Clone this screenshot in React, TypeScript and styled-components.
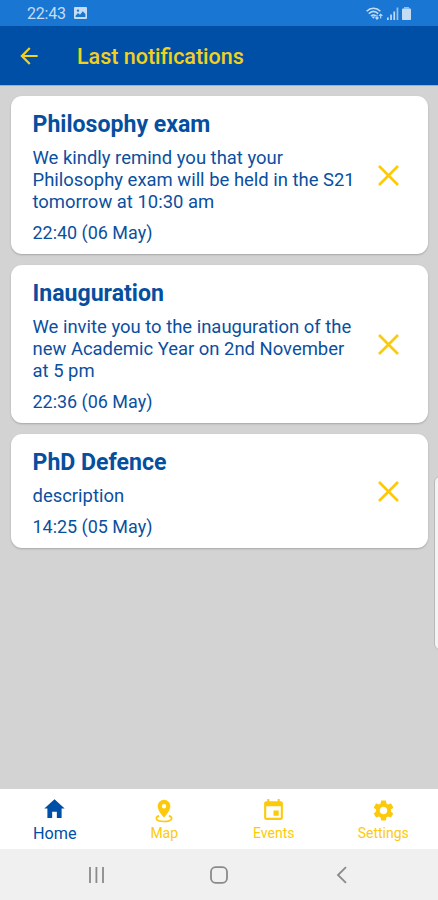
import React from 'react';
import styled, { createGlobalStyle } from 'styled-components';
import { MdArrowBack, MdEvent, MdSettings } from 'react-icons/md';
import { IoMdHome } from 'react-icons/io';

const BLUE = '#004fa6';
const YELLOW = '#fdca0b';

const GlobalStyle = createGlobalStyle`
  * { box-sizing: border-box; }
  body { margin: 0; font-family: Roboto, 'Noto Sans', sans-serif; background: #d3d3d3; }
  svg { display: block; flex: none; }
`;

const Screen = styled.div`
  position: relative;
  display: flex;
  flex-direction: column;
  height: 900px;
  width: 438px;
  overflow: hidden;
  background: #d3d3d3;
`;

const StatusBar = styled.div`
  height: 26px;
  flex: none;
  display: flex;
  align-items: center;
  justify-content: space-between;
  padding: 0 27px 0 27px;
  background: #1976d2;
  color: #c5dcf5;
  font-size: 16px;
`;

const StatusGroup = styled.div<{ $gap: number }>`
  display: flex;
  align-items: center;
  gap: ${(p) => p.$gap}px;
`;

const Clock = styled.span`
  width: 39px;
  white-space: nowrap;
  letter-spacing: -0.2px;
  padding-top: 1px;
`;

const AppBar = styled.header`
  height: 60px;
  flex: none;
  display: flex;
  align-items: center;
  padding: 0 16px;
  gap: 35px;
  background: ${BLUE};
  color: #f2d11d;
  border-bottom: 1px solid #8fb2dd;
`;

const BackButton = styled.button`
  border: 0;
  padding: 0;
  background: none;
  color: inherit;
`;

const AppTitle = styled.h1`
  margin: 2px 0 0;
  font-size: 21.5px;
  font-weight: 500;
  line-height: 28px;
  white-space: nowrap;
`;

const List = styled.main`
  flex: 1;
  display: flex;
  flex-direction: column;
  gap: 11px;
  padding: 10px 10px 0 11px;
`;

const Card = styled.article`
  display: flex;
  align-items: center;
  padding: 15px 22px 10px 21.5px;
  border-radius: 11px;
  background: #fff;
  color: #0b4f9f;
  box-shadow: 0 1px 2px rgba(0, 0, 0, 0.22);
`;

const CardBody = styled.div`
  flex: 1;
`;

const CardTitle = styled.h2`
  margin: 0 0 8px;
  font-size: 23.1px;
  font-weight: 700;
  line-height: 28px;
  color: #064f9f;
`;

const CardText = styled.p`
  margin: 0;
  font-size: 18.45px;
  line-height: 22px;
  white-space: pre;
`;

const CardTime = styled.time`
  display: block;
  margin-top: 9px;
  font-size: 17.95px;
  line-height: 22px;
`;

const CloseButton = styled.button`
  border: 0;
  padding: 0;
  margin: -5px 7px 0 0;
  background: none;
  color: ${YELLOW};
`;

const TabBar = styled.nav`
  height: 60px;
  flex: none;
  display: grid;
  grid-template-columns: repeat(4, 1fr);
  background: #fff;
`;

const Tab = styled.div<{ $active?: boolean }>`
  display: flex;
  flex-direction: column;
  align-items: center;
  padding-top: 8px;
  color: ${(p) => (p.$active ? BLUE : YELLOW)};
  font-size: ${(p) => (p.$active ? 16.2 : 14)}px;
`;

const TabIcon = styled.span<{ $active?: boolean }>`
  height: 27px;
  display: flex;
  align-items: center;
  padding-bottom: ${(p) => (p.$active ? 4 : 0)}px;
`;

const TabLabel = styled.span`
  line-height: 19px;
`;

const SystemNav = styled.div`
  height: 51px;
  flex: none;
  display: flex;
  align-items: center;
  justify-content: space-between;
  padding: 0 84px 0 83.5px;
  background: #f0f0f0;
`;

const EdgeHandle = styled.div`
  position: absolute;
  right: -8px;
  top: 476px;
  width: 12.5px;
  height: 174px;
  border-radius: 6px;
  border: 1px solid #b9b9b9;
  background: #f3f3f3;
`;

const ImageIcon = () => (
  <svg width="13" height="12" viewBox="0 0 13 12">
    <path
      fill="currentColor"
      fillRule="evenodd"
      d="M1 0h11a1 1 0 0 1 1 1v10a1 1 0 0 1-1 1H1a1 1 0 0 1-1-1V1a1 1 0 0 1 1-1zM1.6 10h9.8V7L8.800 4.200 6 7.800 4 6 1.600 8.800zM4 2.400a1.200 1.200 0 1 0 0 2.400 1.200 1.200 0 0 0 0-2.400z"
    />
  </svg>
);

const WifiIcon = () => (
  <svg width="17" height="13" viewBox="0 0 17 13" fill="none" stroke="currentColor" strokeWidth="1.600">
    <path d="M.6 4.200C4.600.2 10.400.2 14.400 4.200M2.800 6.700c3-2.900 6.400-2.900 9.400 0M5 9c1.600-1.300 3.400-1.300 5 0" />
    <path d="M5.500 9.500h3.800L7.400 11.800z" fill="currentColor" stroke="none" />
    <path d="M11 7.800v4.300M9.500 10.500l1.500 1.600 1.500-1.600M14.700 11.600V7.200M13 8.900l1.700-1.700 1.700 1.700" strokeWidth="1.100" />
  </svg>
);

const SignalIcon = () => (
  <svg width="12" height="13" viewBox="0 0 12 13" fill="currentColor">
    <path d="M0 10.500h1.700V13H0zM3.200 7.500h1.700V13H3.200zM6.400 4.500h1.700V13H6.400z" />
    <path d="M9.600.5h1.700V13H9.600z" opacity=".75" />
  </svg>
);

const BatteryIcon = () => (
  <svg width="9" height="13" viewBox="0 0 9 13" fill="currentColor">
    <path d="M2 0h5v1.500H2z" opacity=".7" />
    <path d="M.8 1.500h7.400q.8 0 .8.800v9.900q0 .8-.8.800H.8Q0 13 0 12.200V2.300q0-.8.8-.8z" />
  </svg>
);

const CrossIcon = () => (
  <svg width="21" height="21" viewBox="0 0 21 21" fill="none" stroke="currentColor" strokeWidth="2.700">
    <path d="M1 1l19 19M20 1L1 20" />
  </svg>
);

const MapIcon = () => (
  <svg width="18" height="24" viewBox="0 0 18 24">
    <path
      fill="currentColor"
      fillRule="evenodd"
      d="M9 .8a6.400 6.400 0 0 1 6.400 6.400C15.400 11.900 9 18.600 9 18.600S2.600 11.900 2.600 7.200A6.400 6.400 0 0 1 9 .8zM9 5a2.200 2.200 0 1 0 0 4.400 2.200 2.200 0 0 0 0-4.400z"
    />
    <path
      fill="none"
      stroke="currentColor"
      strokeWidth="1.700"
      d="M4.200 16.900C2.400 17.400 1.300 18.200 1.300 19.300c0 1.900 3.500 3.200 7.700 3.200s7.700-1.300 7.700-3.200c0-1.100-1.100-1.900-2.900-2.400"
    />
  </svg>
);

const RecentsIcon = () => (
  <svg width="25" height="24" viewBox="0 0 25 24" stroke="#8a8a8a" strokeWidth="1.800">
    <path d="M6 4v16M12.400 4v16M19 4v16" />
  </svg>
);

const HomeKeyIcon = () => (
  <svg width="26" height="24" viewBox="0 0 26 24" fill="none" stroke="#8a8a8a" strokeWidth="1.800">
    <rect x="5" y="4.200" width="16" height="15.600" rx="4.500" />
  </svg>
);

const BackKeyIcon = () => (
  <svg width="24" height="24" viewBox="0 0 24 24" fill="none" stroke="#8a8a8a" strokeWidth="1.800">
    <path d="M16 4.200 8 12l8 7.800" />
  </svg>
);

const notifications = [
  {
    title: 'Philosophy exam',
    text: 'We kindly remind you that your\nPhilosophy exam will be held in the S21\ntomorrow at 10:30 am',
    time: '22:40 (06 May)',
  },
  {
    title: 'Inauguration',
    text: 'We invite you to the inauguration of the\nnew Academic Year on 2nd November\nat 5 pm',
    time: '22:36 (06 May)',
  },
  { title: 'PhD Defence', text: 'description', time: '14:25 (05 May)' },
];

const tabs = [
  { label: 'Home', icon: <IoMdHome size={25} />, active: true },
  { label: 'Map', icon: <MapIcon /> },
  { label: 'Events', icon: <MdEvent size={25} /> },
  { label: 'Settings', icon: <MdSettings size={25} /> },
];

export default function App() {
  return (
    <>
      <GlobalStyle />
      <Screen>
        <StatusBar>
          <StatusGroup $gap={8}>
            <Clock>22:43</Clock>
            <ImageIcon />
          </StatusGroup>
          <StatusGroup $gap={3.5}>
            <WifiIcon />
            <SignalIcon />
            <BatteryIcon />
          </StatusGroup>
        </StatusBar>
        <AppBar>
          <BackButton aria-label="Back">
            <MdArrowBack size={26} />
          </BackButton>
          <AppTitle>Last notifications</AppTitle>
        </AppBar>
        <List>
          {notifications.map((n) => (
            <Card key={n.title}>
              <CardBody>
                <CardTitle>{n.title}</CardTitle>
                <CardText>{n.text}</CardText>
                <CardTime>{n.time}</CardTime>
              </CardBody>
              <CloseButton aria-label="Dismiss">
                <CrossIcon />
              </CloseButton>
            </Card>
          ))}
        </List>
        <TabBar>
          {tabs.map((t) => (
            <Tab key={t.label} $active={t.active}>
              <TabIcon $active={t.active}>{t.icon}</TabIcon>
              <TabLabel>{t.label}</TabLabel>
            </Tab>
          ))}
        </TabBar>
        <SystemNav>
          <RecentsIcon />
          <HomeKeyIcon />
          <BackKeyIcon />
        </SystemNav>
        <EdgeHandle />
      </Screen>
    </>
  );
}
